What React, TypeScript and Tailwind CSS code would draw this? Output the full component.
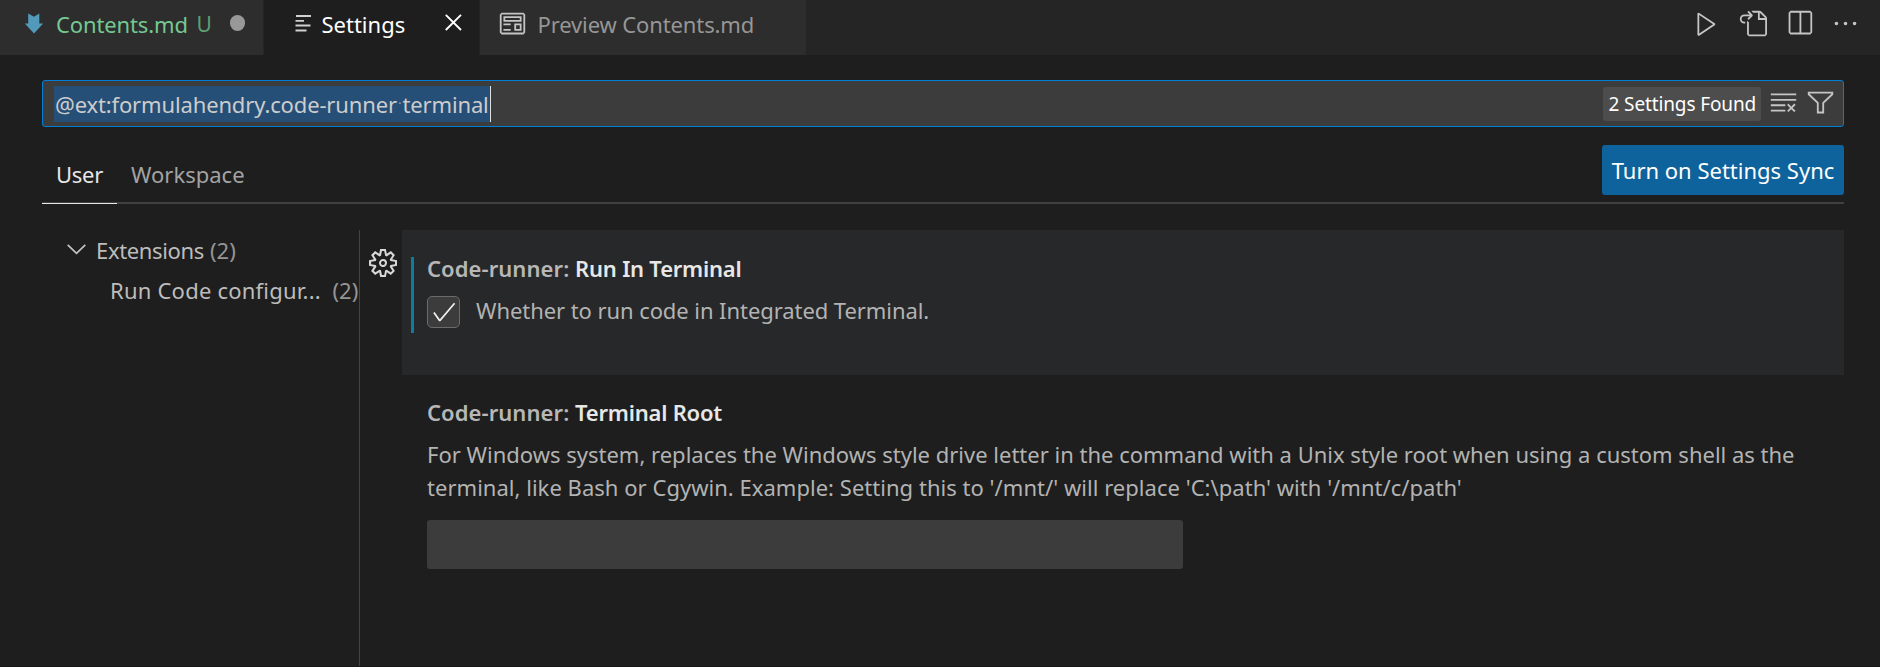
import type { ReactNode } from 'react';
import {
  VscCheck,
  VscClearAll,
  VscEllipsis,
  VscFilter,
  VscGoToFile,
  VscPlay,
  VscPreview,
  VscSettingsGear,
  VscSplitHorizontal,
} from 'react-icons/vsc';

function MarkdownIcon() {
  return (
    <svg className="mt-[13px] h-[22px] w-5 shrink-0" viewBox="0 0 20 22" fill="#519aba">
      <path d="M4.2 0.6 10 3.8 15.3 0.6V10.6H19.2L10 20.6 0.8 10.6H4.2Z" />
    </svg>
  );
}

function SettingsLinesIcon() {
  return (
    <svg className="mt-[14px] h-[19px] w-4 shrink-0" viewBox="0 0 16 19" fill="#d0d0d0">
      <path d="M1 1h15v2H1zM0.5 6h8.5v1.8H0.5zM0.5 10.5h15V12.5H0.5zM0.5 15.6h11v1.9H0.5z" />
    </svg>
  );
}

function CloseIcon() {
  return (
    <svg className="mt-[14px] h-[17px] w-[17px] shrink-0" viewBox="0 0 17 17" stroke="#ffffff" strokeWidth="1.9">
      <path d="M0.8 0.8 16 16M16 0.8 0.8 16" />
    </svg>
  );
}

function ChevronIcon() {
  return (
    <svg className="mt-[9px] h-[11px] w-[19px] shrink-0" viewBox="0 0 19 11" fill="none" stroke="#c5c5c5" strokeWidth="1.6">
      <path d="M0.7 0.8 9.5 9.3 18.3 0.8" />
    </svg>
  );
}

function EditorTabs() {
  return (
    <header className="flex h-[55px] bg-[#252526]">
      <div className="flex w-[263px] bg-[#2d2d2d] pl-6">
        <MarkdownIcon />
        <span className="mt-[9px] ml-3 w-[140.5px] tracking-[-0.12px] text-[#73c991]">Contents.md</span>
        <span className="mt-[9px] w-[33px] text-[21px] text-[#5e9f75]">U</span>
        <span className="mt-[15px] size-[15.5px] rounded-full bg-[#989898]" />
      </div>
      <div className="ml-px flex w-[215px] bg-[#1e1e1e] pl-[31px]">
        <SettingsLinesIcon />
        <span className="mt-[9px] ml-[10.5px] w-[123px] text-white">Settings</span>
        <CloseIcon />
      </div>
      <div className="ml-px flex w-[326px] bg-[#2d2d2d] pl-[17.5px] text-[#969696]">
        <VscPreview className="mt-[8.5px] size-[29px] shrink-0 text-[#c5c5c5]" />
        <span className="mt-[9px] ml-[11px] tracking-[-0.12px]">Preview Contents.md</span>
      </div>
      <div className="mt-[8.5px] mr-5 ml-auto flex gap-[17.5px] text-[#c5c5c5]">
        <VscPlay className="size-[29px]" />
        <VscGoToFile className="size-[29px]" />
        <VscSplitHorizontal className="size-[29px]" />
        <VscEllipsis className="size-[29px]" />
      </div>
    </header>
  );
}

function SearchBox() {
  return (
    <div className="mt-[25px] flex h-[47px] rounded-[3px] border border-[#007fd4] bg-[#3c3c3c] pl-[11px]">
      <div className="mt-[5px] flex h-9 w-[437px] border-r border-[#e0e0e0] bg-[#264f78] pt-[3px] pl-px tracking-[-0.14px] whitespace-pre text-[#cccccc]">
        @ext:formulahendry.code-runner
        <span className="w-[5.6px] text-center text-[12px] text-[#93a5b8]">·</span>
        terminal
      </div>
      <div className="ml-auto flex">
        <span className="mt-1.5 h-[34px] w-[158px] rounded-[3px] bg-[#4d4d4d] pt-1 pl-[5.5px] text-[19px] leading-[26px] tracking-[-0.12px] whitespace-nowrap text-white">
          2 Settings Found
        </span>
        <VscClearAll className="mt-[6.5px] ml-2 size-[29px] text-[#c5c5c5]" />
        <VscFilter className="mt-[6.5px] mr-[8.5px] ml-[7.5px] size-[29px] text-[#c5c5c5]" />
      </div>
    </div>
  );
}

function ScopeTabs() {
  return (
    <nav className="flex h-[77px] border-b-2 border-[#404040]">
      <span className="mt-8 -mb-0.5 w-[75px] border-b border-[#e7e7e7] pl-3.5 tracking-[-0.25px] text-[#e7e7e7]">User</span>
      <span className="mt-8 ml-3.5 text-[#a3a3a3]">Workspace</span>
      <button className="mt-[18px] ml-auto h-[50px] w-[242px] rounded-[3px] bg-[#0e639c] text-white">
        Turn on Settings Sync
      </button>
    </nav>
  );
}

function SettingTitle({ name }: { name: string }) {
  return (
    <h2 className="font-semibold whitespace-pre text-[#b7b7b7]">
      <span className="tracking-[0.07px]">Code-runner: </span>
      <span className="tracking-[-0.22px] text-[#e7e7e7]">{name}</span>
    </h2>
  );
}

function TreeRow({ children }: { children: ReactNode }) {
  return <div className="flex h-10 text-[#bcbcbc]">{children}</div>;
}

function SettingsBody() {
  return (
    <main className="mt-[26px] flex flex-1">
      <aside className="w-[318px] border-r border-[#444444] pt-[5px]">
        <TreeRow>
          <span className="ml-[25px] flex">
            <ChevronIcon />
          </span>
          <span className="ml-2.5 w-[114px] tracking-[-0.35px]">Extensions</span>
          <span className="text-[#959595]">(2)</span>
        </TreeRow>
        <TreeRow>
          <span className="ml-[68px] w-[222.5px] tracking-[0.22px]">Run Code configur...</span>
          <span className="text-[#959595]">(2)</span>
        </TreeRow>
      </aside>
      <div className="w-[42px] pt-[19px] pl-[8.5px]">
        <VscSettingsGear className="size-7 text-[#d8d8d8]" />
      </div>
      <section className="flex-1">
        <article className="flex h-[145px] bg-[#27282a] pt-[23px] pl-[9px]">
          <div className="mt-1 h-[76px] w-[3px] bg-[#0c7d9d]" />
          <div className="ml-[13px]">
            <SettingTitle name="Run In Terminal" />
            <label className="mt-3 flex text-[#b3b3b3]">
              <span className="mt-px flex h-8 w-[33px] items-center justify-center rounded-[5px] border border-[#6b6b6b] bg-[#3c3c3c]">
                <VscCheck className="size-7 shrink-0 text-[#f0f0f0]" />
              </span>
              <span className="ml-4 tracking-[-0.07px]">Whether to run code in Integrated Terminal.</span>
            </label>
          </div>
        </article>
        <article className="pt-[22px] pl-[25px]">
          <SettingTitle name="Terminal Root" />
          <p className="mt-[11px] leading-[33px] whitespace-nowrap text-[#b3b3b3]">
            For Windows system, replaces the Windows style drive letter in the command with a Unix style root when using a custom shell as the
            <br />
            <span className="tracking-[0.03px]">
              terminal, like Bash or Cgywin. Example: Setting this to '/mnt/' will replace 'C:\path' with '/mnt/c/path'
            </span>
          </p>
          <div className="mt-4 h-[49px] w-[756px] rounded-[3px] bg-[#3c3c3c]" />
        </article>
      </section>
    </main>
  );
}

export default function App() {
  return (
    <div className="flex h-[667px] w-[1880px] flex-col overflow-hidden border-b border-[#181818] bg-[#1e1e1e] font-['Noto_Sans','Open_Sans',sans-serif] text-[22px] leading-[30px]">
      <EditorTabs />
      <div className="mr-9 ml-[42px] flex flex-1 flex-col">
        <SearchBox />
        <ScopeTabs />
        <SettingsBody />
      </div>
    </div>
  );
}
